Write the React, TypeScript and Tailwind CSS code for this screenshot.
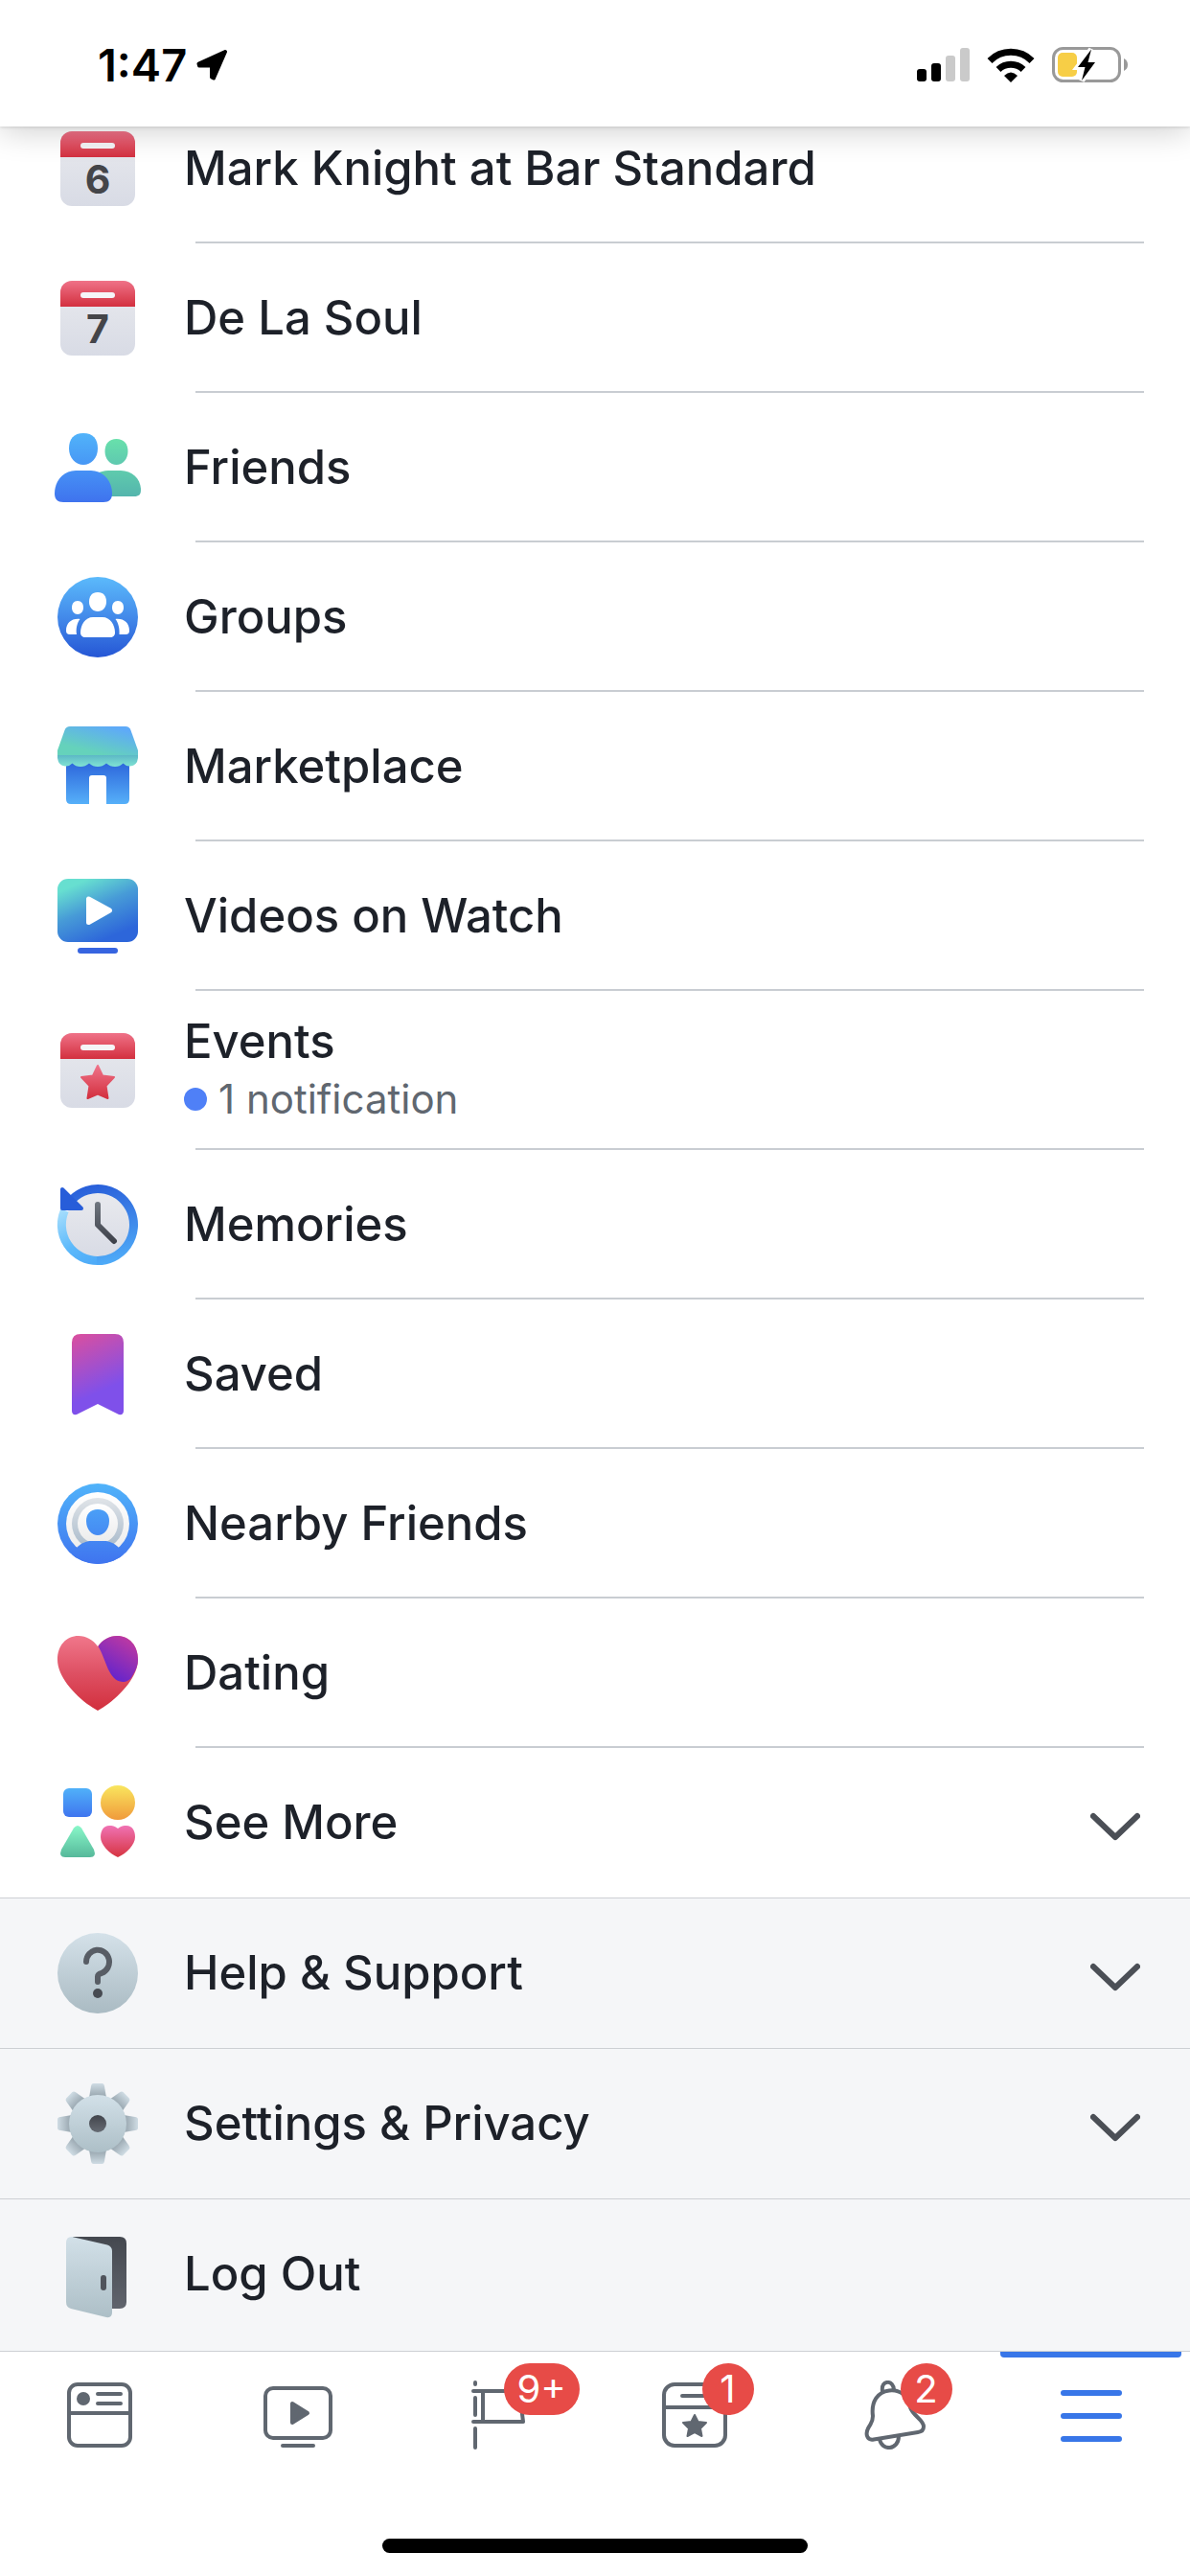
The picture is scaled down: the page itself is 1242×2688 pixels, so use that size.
import type { ReactNode } from 'react';

interface MenuItem {
  label: string;
  icon: ReactNode;
  note?: string;
  expandable?: boolean;
}

function Icon({ children }: { children: ReactNode }) {
  return (
    <svg viewBox="0 0 84 84" className="size-21 shrink-0 overflow-visible" aria-hidden="true">
      {children}
    </svg>
  );
}

interface GradientProps {
  id: string;
  from: string;
  to: string;
  mid?: string;
  x1?: string;
  x2?: string;
  y1?: string;
  y2?: string;
}

function Gradient({ id, from, to, mid, x1 = '0', x2 = '0', y1 = '0', y2 = '1' }: GradientProps) {
  return (
    <linearGradient id={id} x1={x1} x2={x2} y1={y1} y2={y2}>
      <stop offset="0" stopColor={from} />
      {mid && <stop offset="0.5" stopColor={mid} />}
      <stop offset="1" stopColor={to} />
    </linearGradient>
  );
}

function CalendarIcon({ day }: { day?: string }) {
  return (
    <Icon>
      <Gradient id="cal-page" from="#e9eaee" to="#d8dbe5" />
      <Gradient id="cal-red" from="#ef7288" to="#d3303f" />
      <rect x="3" y="3" width="78" height="78" rx="12" fill="url(#cal-page)" />
      <path d="M3 30V15A12 12 0 0 1 15 3H69A12 12 0 0 1 81 15V30Z" fill="url(#cal-red)" />
      <rect x="24" y="15" width="36" height="6" rx="3" fill="#f5f5f8" />
      {day ? (
        <text x="42" y="68" textAnchor="middle" fontSize="41" fontWeight="700" fill="#444549">
          {day}
        </text>
      ) : (
        <path
          d="M42 37L47 47.500L59 49L50.500 58L52.500 71L42 66.500L31.500 71L33.500 58L25 49L37 47.500Z"
          fill="url(#cal-red)"
          stroke="url(#cal-red)"
          strokeWidth="2"
          strokeLinejoin="round"
        />
      )}
    </Icon>
  );
}

function FriendsIcon() {
  return (
    <Icon>
      <Gradient id="fr-green-head" from="#68e0ab" to="#5fc9b0" />
      <Gradient id="fr-green" from="#5fcbad" to="#54b5ad" />
      <Gradient id="fr-head" from="#51b3fa" to="#4797f5" />
      <Gradient id="fr-body" from="#4691f5" to="#3f73ee" />
      <path d="M61.500 12C69 12 73.500 17 73.500 25C73.500 33 68 39 61.500 39S49.500 33 49.500 25C49.500 17 54 12 61.500 12Z" fill="url(#fr-green-head)" />
      <path d="M40 49C44 46 49 45 53 45H66C78 45 87 54 87 65C87 70 85 72 80 72H50Z" fill="url(#fr-green)" />
      <path d="M27 6C37 6 42 12 42 22C42 32 35 39 27 39S12 32 12 22C12 12 17 6 27 6Z" fill="url(#fr-head)" />
      <path d="M19 45H35C48 45 57 56 57 69C57 75 54 78 48 78H6C0 78-3 75-3 69C-3 56 6 45 19 45Z" fill="url(#fr-body)" />
    </Icon>
  );
}

function GroupsIcon() {
  return (
    <Icon>
      <Gradient id="grp" from="#5bbafb" mid="#438aea" to="#2556d5" />
      <circle cx="42" cy="42" r="42" fill="url(#grp)" />
      <g fill="#fff">
        <path d="M42 16C48 16 51 20 51 26S47 36 42 36S33 32 33 26S36 16 42 16Z" />
        <path d="M21 25C25 25 27 28 27 32S24.500 39 21 39S15 36 15 32S17 25 21 25Z" />
        <path d="M63 25C67 25 69 28 69 32S66.500 39 63 39S57 36 57 32S59 25 63 25Z" />
        <path d="M37 42H47C55 42 60 50 60 58C60 61.500 58 63 55 63H29C26 63 24 61.500 24 58C24 50 29 42 37 42Z" />
        <path d="M23.500 44C20.500 48 19 54 20 60H13C10 60 9 58.500 9 56C9 48 15 43 23.500 44Z" />
        <path d="M60.500 44C63.500 48 65 54 64.500 60H71C74 60 75 58.500 75 56C75 48 69 43 60.500 44Z" />
      </g>
    </Icon>
  );
}

function MarketplaceIcon() {
  return (
    <Icon>
      <Gradient id="mk-shop" from="#2b63da" to="#56b0f9" />
      <Gradient id="mk-roof" from="#65d2bb" to="#5eaaf8" x1="0.3" y1="0.8" x2="0.8" y2="0.1" />
      <Gradient id="mk-edge" from="#5cb8c6" to="#80e3d3" />
      <path d="M9 36H75V76Q75 81 70 81H51V54Q51 51 48 51H36Q33 51 33 54V81H14Q9 81 9 76Z" fill="url(#mk-shop)" />
      <path d="M13 0H71Q75 0 76.500 4L84 25V30H0V25L7.500 4Q9 0 13 0Z" fill="url(#mk-roof)" />
      <path
        d="M0 30H84V33Q83 41 76 41.500Q72 42 68.500 38.500Q65 42 60 42T51 38.500Q47 42 42 42T33 38.500Q29 42 24 42T15.500 38.500Q12 42 8 41.500Q1 41 0 33Z"
        fill="url(#mk-edge)"
      />
    </Icon>
  );
}

function WatchIcon() {
  return (
    <Icon>
      <linearGradient id="tv" x1="0.2" y1="0" x2="0.75" y2="1">
        <stop offset="0.08" stopColor="#67dfd0" />
        <stop offset="0.45" stopColor="#479bd7" />
        <stop offset="0.9" stopColor="#2d66da" />
      </linearGradient>
      <rect y="3" width="84" height="66" rx="11" fill="url(#tv)" />
      <rect x="21" y="75" width="42" height="6" rx="3" fill="#3664e0" />
      <path d="M32.500 24V48.500L54.500 36Z" fill="#fff" stroke="#fff" strokeWidth="5" strokeLinejoin="round" />
    </Icon>
  );
}

function MemoriesIcon() {
  return (
    <Icon>
      <Gradient id="mem-face" from="#e9eaee" to="#d8dbe5" />
      <linearGradient id="mem-right" gradientUnits="userSpaceOnUse" x1="30" y1="0" x2="50" y2="84">
        <stop offset="0" stopColor="#275dd9" />
        <stop offset="0.5" stopColor="#3d84e8" />
        <stop offset="1" stopColor="#4eabf8" />
      </linearGradient>
      <linearGradient id="mem-left" gradientUnits="userSpaceOnUse" x1="5" y1="27" x2="35" y2="84">
        <stop offset="0" stopColor="#a5ddfc" />
        <stop offset="0.6" stopColor="#5cb9fb" />
        <stop offset="1" stopColor="#4eabf8" />
      </linearGradient>
      <linearGradient id="mem-hand" gradientUnits="userSpaceOnUse" x1="0" y1="18" x2="0" y2="62">
        <stop offset="0" stopColor="#707780" />
        <stop offset="1" stopColor="#3c3f48" />
      </linearGradient>
      <circle cx="42" cy="42" r="34" fill="url(#mem-face)" />
      <path d="M7.500 27A37.500 37.500 0 0 0 42 79.500" fill="none" stroke="url(#mem-left)" strokeWidth="9" />
      <path d="M16 15A37.500 37.500 0 1 1 41 79.500" fill="none" stroke="url(#mem-right)" strokeWidth="9" />
      <path d="M5 5V25H25Z" fill="#275dd9" stroke="#275dd9" strokeWidth="4" strokeLinejoin="round" />
      <path d="M42 21V42L59 59" fill="none" stroke="url(#mem-hand)" strokeWidth="6" strokeLinecap="round" strokeLinejoin="round" />
    </Icon>
  );
}

function SavedIcon() {
  return (
    <Icon>
      <linearGradient id="saved" gradientUnits="userSpaceOnUse" x1="18" y1="0" x2="45" y2="60">
        <stop offset="0" stopColor="#da4f9f" />
        <stop offset="1" stopColor="#7f50ea" />
      </linearGradient>
      <path d="M24 0H60Q69 0 69 9V80Q69 85 64 84L42 73L20 84Q15 85 15 80V9Q15 0 24 0Z" fill="url(#saved)" />
    </Icon>
  );
}

function NearbyIcon() {
  return (
    <Icon>
      <linearGradient id="near" gradientUnits="userSpaceOnUse" x1="0" y1="0" x2="0" y2="84">
        <stop offset="0" stopColor="#50b3fa" />
        <stop offset="1" stopColor="#3f74ef" />
      </linearGradient>
      <Gradient id="near-white" from="#ffffff" to="#ebebeb" />
      <Gradient id="near-ring" from="#e0e4e8" to="#a7b9ca" />
      <clipPath id="near-clip">
        <circle cx="42" cy="42" r="42" />
      </clipPath>
      <circle cx="42" cy="42" r="42" fill="url(#near)" />
      <circle cx="42" cy="42" r="33" fill="url(#near-white)" />
      <circle cx="42" cy="42" r="27" fill="url(#near-ring)" />
      <circle cx="42" cy="42" r="21" fill="url(#near-white)" />
      <path d="M42 27C50 27 54 32 54 39C54 48 48 54 42 54S30 48 30 39C30 32 34 27 42 27Z" fill="url(#near)" />
      <path d="M14 76L20 67C25 62 30 60 35 60H49C54 60 59 62 64 67L70 76L42 90Z" fill="url(#near)" clipPath="url(#near-clip)" />
    </Icon>
  );
}

function DatingIcon() {
  return (
    <Icon>
      <Gradient id="date-red" from="#f0778b" mid="#de5063" to="#d22f3d" />
      <Gradient id="date-purple" from="#c23aa0" to="#6424cb" x1="0.8" y1="0" x2="0.3" y2="0.9" />
      <path d="M42 14C37 7 30 3 22 3C9 3 0 13 0 28C0 47 22 70 42 81C62 70 84 47 84 28C84 13 75 3 62 3C54 3 47 7 42 14Z" fill="url(#date-red)" />
      <path d="M42.500 14C47 7 54 3 62 3C75 3 84 13 84 28C84 33 82 39 78 45C76 49 72 51 68 51C53 50 51 28 42.500 14Z" fill="url(#date-purple)" />
    </Icon>
  );
}

function SeeMoreIcon() {
  return (
    <Icon>
      <Gradient id="sm-blue" from="#50b1f9" to="#3f75ef" />
      <Gradient id="sm-yellow" from="#f9e65e" to="#f09a3b" />
      <Gradient id="sm-green" from="#89f8c9" to="#56b89a" />
      <Gradient id="sm-pink" from="#f072b4" to="#d63440" />
      <rect x="6" y="6" width="30" height="30" rx="6" fill="url(#sm-blue)" />
      <circle cx="63" cy="21" r="18" fill="url(#sm-yellow)" />
      <path d="M17 47.500Q21 42.500 25 47.500L38 70Q41 78 34 78H8Q1 78 4 70Z" fill="url(#sm-green)" />
      <path d="M63 48C60 45.500 57 45 54 45C48 45 45 50 45 57C45 65 54 74 63 78C72 74 81 65 81 57C81 50 78 45 72 45C69 45 66 45.500 63 48Z" fill="url(#sm-pink)" />
    </Icon>
  );
}

function HelpIcon() {
  return (
    <Icon>
      <Gradient id="help" from="#d4e1e9" to="#aabbc3" />
      <circle cx="42" cy="42" r="42" fill="url(#help)" />
      <path d="M30 30A12 12.500 0 1 1 46 42Q42 43 42 45.500V51" fill="none" stroke="#585d65" strokeWidth="6" strokeLinecap="round" />
      <circle cx="42" cy="63" r="5" fill="#474b52" />
    </Icon>
  );
}

function SettingsIcon() {
  return (
    <Icon>
      <Gradient id="gear" from="#d2e0e8" to="#adbfc7" />
      <Gradient id="gear-tooth" from="#cfdce4" to="#93a1aa" />
      <Gradient id="gear-hole" from="#42454c" to="#666b73" />
      {[0, 45, 90, 135, 180, 225, 270, 315].map((angle) => (
        <path key={angle} d="M37.500 0H46.500Q48.500 0 49 3L51 15H33L35 3Q35.500 0 37.500 0Z" transform={`rotate(${angle} 42 42)`} fill="url(#gear-tooth)" />
      ))}
      <circle cx="42" cy="42" r="30" fill="url(#gear)" />
      <circle cx="42" cy="42" r="9" fill="url(#gear-hole)" />
    </Icon>
  );
}

function LogOutIcon() {
  return (
    <Icon>
      <Gradient id="door-frame" from="#44484f" to="#60646d" />
      <Gradient id="door" from="#d2e0e8" to="#adbfc7" />
      <path d="M16 3H65Q72 3 72 10V71Q72 78 65 78H40Z" fill="url(#door-frame)" />
      <path d="M15 3L52 11.500Q57 13 57 18V82Q57 88 51 87L14 78Q9 76.500 9 71V9Q9 3 15 3Z" fill="url(#door)" />
      <rect x="45" y="43" width="6" height="16" rx="3" fill="#50545c" />
    </Icon>
  );
}

function Chevron() {
  return (
    <svg viewBox="0 0 52 30" className="mt-2 h-[30px] w-[52px] shrink-0" fill="none" stroke="#4b4f56" strokeWidth="6" strokeLinecap="round" strokeLinejoin="round" aria-hidden="true">
      <path d="M3 4L26 26L49 4" />
    </svg>
  );
}

const shortcuts: MenuItem[] = [
  { label: 'Mark Knight at Bar Standard', icon: <CalendarIcon day="6" /> },
  { label: 'De La Soul', icon: <CalendarIcon day="7" /> },
  { label: 'Friends', icon: <FriendsIcon /> },
  { label: 'Groups', icon: <GroupsIcon /> },
  { label: 'Marketplace', icon: <MarketplaceIcon /> },
  { label: 'Videos on Watch', icon: <WatchIcon /> },
  { label: 'Events', icon: <CalendarIcon />, note: '1 notification' },
  { label: 'Memories', icon: <MemoriesIcon /> },
  { label: 'Saved', icon: <SavedIcon /> },
  { label: 'Nearby Friends', icon: <NearbyIcon /> },
  { label: 'Dating', icon: <DatingIcon /> },
  { label: 'See More', icon: <SeeMoreIcon />, expandable: true },
];

const account: MenuItem[] = [
  { label: 'Help & Support', icon: <HelpIcon />, expandable: true },
  { label: 'Settings & Privacy', icon: <SettingsIcon />, expandable: true },
  { label: 'Log Out', icon: <LogOutIcon /> },
];

function MenuRow({ item }: { item: MenuItem }) {
  return (
    <button type="button" className={`flex w-full items-center gap-12 pr-[52px] pl-15 text-left ${item.note ? 'h-[166px]' : 'h-39'}`}>
      {item.icon}
      <span className="flex flex-1 flex-col">
        <span className="text-[49px] leading-[60px] font-medium">{item.label}</span>
        {item.note && (
          <span className="flex items-center gap-3 text-[42px] leading-[60px] text-[#606770]">
            <span className="size-6 rounded-full bg-[#4f80f7]"></span>
            {item.note}
          </span>
        )}
      </span>
      {item.expandable && <Chevron />}
    </button>
  );
}

function StatusBar() {
  return (
    <header className="relative z-10 flex h-33 items-center justify-between bg-white pt-1 pr-16 pl-[102px] text-black shadow-[0_1px_3px_rgba(0,0,0,0.12),0_4px_32px_rgba(0,0,0,0.2)]">
      <div className="flex items-center gap-2.5">
        <span className="text-[47px] leading-[60px] font-semibold">1:47</span>
        <svg viewBox="0 0 32 32" className="size-8" aria-hidden="true">
          <path d="M30 2L2.500 14.500L3 16.500H16V28.500L18 29.500Z" fill="#000" stroke="#000" strokeWidth="4" strokeLinejoin="round" />
        </svg>
      </div>
      <div className="flex items-center gap-[18px]">
        {/* Cell signal */}
        <svg viewBox="0 0 55 36" className="h-9 w-[55px]" aria-hidden="true">
          <rect x="0" y="22" width="10" height="13" rx="3" />
          <rect x="15" y="16" width="10" height="19" rx="3" />
          <rect x="30" y="8" width="10" height="27" rx="3" fill="#cacaca" />
          <rect x="45" y="0" width="10" height="35" rx="3" fill="#cacaca" />
        </svg>
        {/* Wi-Fi */}
        <svg viewBox="0 0 50 36" className="h-9 w-[50px]" aria-hidden="true">
          <path d="M3 13.500A31 31 0 0 1 47 13.500" fill="none" stroke="#000" strokeWidth="7" />
          <path d="M12 22.500A19 19 0 0 1 38 22.500" fill="none" stroke="#000" strokeWidth="7" />
          <path d="M25 36L18 29Q25 22 32 29Z" />
        </svg>
        {/* Battery */}
        <svg viewBox="0 0 80 38" className="h-[38px] w-20" aria-hidden="true">
          <rect x="1.500" y="1.500" width="69" height="34" rx="10" fill="none" stroke="#999" strokeWidth="3" />
          <path d="M75 12Q79 14 79 18.500T75 25Z" fill="#999" />
          <rect x="6" y="6" width="20" height="25" rx="5" fill="#f7ce46" />
          <path d="M41 2.500L27 21H34.500L31 35L45 16H37.500Z" stroke="#fff" strokeWidth="6" />
          <path d="M41 2.500L27 21H34.500L31 35L45 16H37.500Z" />
        </svg>
      </div>
    </header>
  );
}

interface Tab {
  label: string;
  badge?: string;
  active?: boolean;
  drawing: ReactNode;
}

const tabs: Tab[] = [
  {
    label: 'News Feed',
    drawing: (
      <>
        <rect x="4" y="4" width="64" height="64" rx="9" />
        <path d="M4 34H68M34 14H58M34 24H58" />
        <circle cx="19" cy="19" r="7" fill="#606770" stroke="none" />
      </>
    ),
  },
  {
    label: 'Watch',
    drawing: (
      <>
        <rect x="2" y="8" width="68" height="52" rx="8" />
        <path d="M20 68H52" />
        <path d="M30 24V44L46 34Z" fill="#606770" />
      </>
    ),
  },
  {
    label: 'Pages',
    badge: '9+',
    drawing: <path d="M14 2V4M14 18V36M14 50V70M12 11H60L64 43H12M22 11V43" />,
  },
  {
    label: 'Events',
    badge: '1',
    drawing: (
      <>
        <rect x="4" y="4" width="64" height="64" rx="11" />
        <path d="M4 28H68M23 16H50" />
        <path d="M36 36L39.500 43L48 44L42 50L43.500 58L36 54L28.500 58L30 50L24 44L32.500 43Z" fill="#606770" strokeWidth="2" />
      </>
    ),
  },
  {
    label: 'Notifications',
    badge: '2',
    drawing: (
      <>
        <path d="M25 11C23 -1 37 -1 37 10" />
        <path d="M16 61.500C9 63 7 56 10 50C13 44 15 44 15 37C13 22 20 12 32 10.500C44 9 52 17 54 28C57 37 68 41 68 48C68 52 66 53.500 62 54Z" />
        <path d="M22 61C24 74 42 73 42 58" />
      </>
    ),
  },
  {
    label: 'Menu',
    active: true,
    drawing: <path d="M7 13H65M7 37H65M7 61H65" stroke="#3876e8" strokeWidth="6" />,
  },
];

function TabBar() {
  return (
    <nav className="flex flex-1 flex-col justify-between border-t border-[#cdd0d4] bg-white">
      <div className="grid grid-cols-6">
        {tabs.map((tab) => (
          <button key={tab.label} type="button" aria-label={tab.label} className="relative flex h-[132px] items-center justify-center">
            {tab.active && <span className="absolute top-0 right-[9px] left-[9px] h-1.5 rounded-b-sm bg-[#3876e8]"></span>}
            <svg viewBox="0 0 72 72" className="size-18" fill="none" stroke="#606770" strokeWidth="4" strokeLinecap="round" strokeLinejoin="round" aria-hidden="true">
              {tab.drawing}
            </svg>
            {tab.badge && (
              <span className="absolute top-3 left-1/2 ml-2 flex h-[54px] min-w-[54px] items-center justify-center rounded-full bg-[#e74b47] px-3.5 text-[40px] leading-none text-white">
                {tab.badge}
              </span>
            )}
          </button>
        ))}
      </div>
      <div className="mx-auto mt-[63px] mb-6 h-[15px] w-[444px] rounded-full bg-black"></div>
    </nav>
  );
}

export default function App() {
  return (
    <div className="flex min-h-screen flex-col overflow-x-hidden bg-white font-['Inter',sans-serif] text-[#1d2129]">
      <StatusBar />

      {/* The list is scrolled, so its first row slides under the status bar */}
      <main className="-mt-[34px]">
        <ul>
          {shortcuts.map((item) => (
            <li key={item.label}>
              <MenuRow item={item} />
              {!item.expandable && <hr className="-mt-0.5 mr-12 ml-51 border-t-2 border-[#c9cdd2]" />}
            </li>
          ))}
        </ul>
        <ul className="bg-[#f5f6f8] pb-0.5">
          {account.map((item) => (
            <li key={item.label} className="border-t border-[#cdd0d4]">
              <MenuRow item={item} />
            </li>
          ))}
        </ul>
      </main>

      <TabBar />
    </div>
  );
}
